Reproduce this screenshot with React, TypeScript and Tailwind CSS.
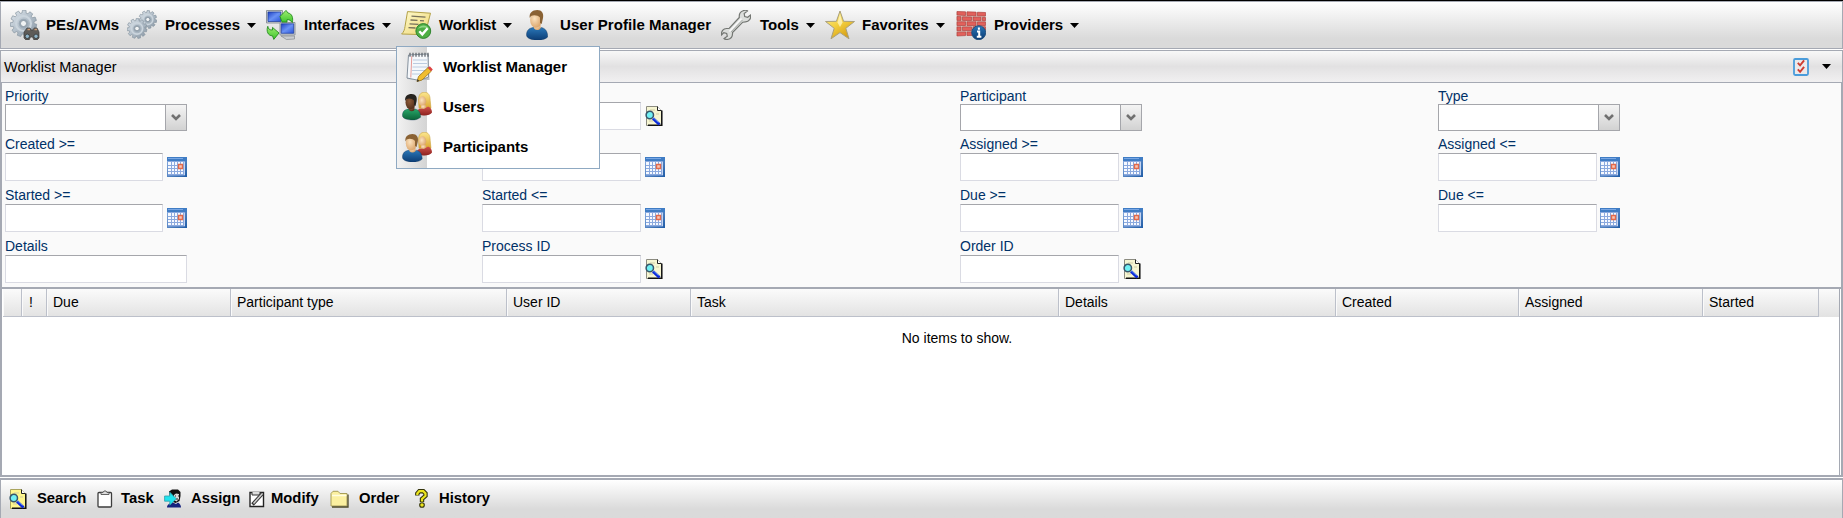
import React from "react";

function Svg({ w, h, children, cls = "" }: { w: number; h: number; children: React.ReactNode; cls?: string }) {
  return (
    <svg width={w} height={h} viewBox={`0 0 ${w} ${h}`} className={"block shrink-0 " + cls}>
      {children}
    </svg>
  );
}

function Defs() {
  return (
    <svg width="0" height="0" className="absolute">
      <defs>
        <linearGradient id="steel" x1="0" y1="0" x2="1" y2="1">
          <stop offset="0" stopColor="#dfe6ec" />
          <stop offset="0.5" stopColor="#b3bfca" />
          <stop offset="1" stopColor="#8593a0" />
        </linearGradient>
        <linearGradient id="screen" x1="0" y1="0" x2="1" y2="1">
          <stop offset="0" stopColor="#1d40c4" />
          <stop offset="0.5" stopColor="#6a92f4" />
          <stop offset="1" stopColor="#2a55da" />
        </linearGradient>
        <linearGradient id="green" x1="0" y1="0" x2="0" y2="1">
          <stop offset="0" stopColor="#a0ee70" />
          <stop offset="1" stopColor="#3cc42c" />
        </linearGradient>
        <linearGradient id="paper" x1="0" y1="0" x2="1" y2="1">
          <stop offset="0" stopColor="#fffbd0" />
          <stop offset="1" stopColor="#eed56e" />
        </linearGradient>
        <radialGradient id="skin" cx="0.4" cy="0.4" r="0.7">
          <stop offset="0" stopColor="#fbe3c0" />
          <stop offset="1" stopColor="#d79e62" />
        </radialGradient>
        <radialGradient id="dark" cx="0.4" cy="0.4" r="0.7">
          <stop offset="0" stopColor="#8d5a38" />
          <stop offset="1" stopColor="#4c2b19" />
        </radialGradient>
        <linearGradient id="blue" x1="0" y1="0" x2="0" y2="1">
          <stop offset="0" stopColor="#2a77b8" />
          <stop offset="1" stopColor="#0b3c74" />
        </linearGradient>
        <linearGradient id="teal" x1="0" y1="0" x2="0" y2="1">
          <stop offset="0" stopColor="#27a769" />
          <stop offset="1" stopColor="#0b6238" />
        </linearGradient>
        <linearGradient id="red" x1="0" y1="0" x2="0" y2="1">
          <stop offset="0" stopColor="#d0524c" />
          <stop offset="1" stopColor="#8d211f" />
        </linearGradient>
        <linearGradient id="hair" x1="0" y1="0" x2="0" y2="1">
          <stop offset="0" stopColor="#fbe68e" />
          <stop offset="1" stopColor="#dba62e" />
        </linearGradient>
        <linearGradient id="gold" x1="0" y1="0" x2="0.6" y2="1">
          <stop offset="0" stopColor="#fdf3a0" />
          <stop offset="0.55" stopColor="#f3cf3e" />
          <stop offset="1" stopColor="#d79f16" />
        </linearGradient>
        <linearGradient id="cal" x1="0" y1="0" x2="1" y2="1">
          <stop offset="0" stopColor="#8fb0e2" />
          <stop offset="1" stopColor="#1f5ca6" />
        </linearGradient>
      </defs>
    </svg>
  );
}

function Gear({ cx, cy, r, teeth = 11 }: { cx: number; cy: number; r: number; teeth?: number }) {
  const pts: string[] = [];
  const step = (Math.PI * 2) / teeth;
  for (let i = 0; i < teeth; i++) {
    const a = i * step + 0.2;
    [[-0.34, 0.8], [-0.24, 1], [0.24, 1], [0.34, 0.8]].forEach(([o, k]) => {
      pts.push(`${(cx + Math.cos(a + o * step) * r * k).toFixed(2)},${(cy + Math.sin(a + o * step) * r * k).toFixed(2)}`);
    });
  }
  return (
    <g>
      <polygon points={pts.join(" ")} fill="url(#steel)" stroke="#8795a1" strokeWidth="0.7" strokeLinejoin="round" />
      <circle cx={cx} cy={cy} r={r * 0.56} fill="none" stroke="#cbd5dd" strokeWidth={r * 0.16} />
      <circle cx={cx} cy={cy} r={r * 0.36} fill="#9dabb7" />
      <circle cx={cx} cy={cy} r={r * 0.23} fill="#f1f3f4" stroke="#7f8d99" strokeWidth="0.8" />
    </g>
  );
}

function PesIcon() {
  return (
    <Svg w={30} h={30}>
      <Gear cx={13.5} cy={13.5} r={13.3} />
      <path d="M14 22l3-4h3l1 2h2l1-2h3l2 4v6l-2 2h-3l-1.500-3h-2l-1.500 3h-3l-2-2z" fill="#5d5b58" stroke="#3e3e3e" strokeWidth="0.7" />
      <circle cx="17.300" cy="26.300" r="2.200" fill="#8fb4c8" stroke="#333" strokeWidth="0.8" />
      <circle cx="26" cy="26.300" r="2.200" fill="#8fb4c8" stroke="#333" strokeWidth="0.8" />
      <path d="M17.500 19.500h2.500M24.500 19.500H27" stroke="#c79a77" strokeWidth="1.300" />
    </Svg>
  );
}

function GearsIcon() {
  return (
    <Svg w={30} h={30}>
      <Gear cx={20.800} cy={9.500} r={9} />
      <Gear cx={10} cy={18.500} r={10} />
    </Svg>
  );
}

function InterfacesIcon() {
  return (
    <Svg w={30} h={30}>
      <path d="M0.500 0.500h16v12.500h-16z" fill="#c9ced2" stroke="#8f959b" />
      <path d="M2 2h12.800v9.500H2z" fill="url(#screen)" stroke="#17369a" strokeWidth="0.7" />
      <path d="M14 12.500h15V25H14z" fill="#d3d7da" stroke="#8f959b" />
      <path d="M15.200 13.800h12.500v9.500H15.200z" fill="url(#screen)" stroke="#17369a" strokeWidth="0.7" />
      <path d="M15 26h13.500v3l-8 .5z" fill="#c9ccd0" stroke="#85898f" strokeWidth="0.7" />
      <path d="M14 6.500L20 0.400l2 2.600c4 .6 5.400 4.700 4.300 9.500-1.800-2.300-3.300-3-5.300-2.800v2.300H16z" fill="url(#green)" stroke="#258c1e" strokeWidth="0.9" />
      <path d="M1.800 16.300c.3 2.700 2 3.900 4.700 3.700v-2.600l6.500 5.600-5.200 6.400-1.300-3.600C2 26 0 21 1.800 16.300z" fill="url(#green)" stroke="#258c1e" strokeWidth="0.9" />
    </Svg>
  );
}

function WorklistIcon() {
  return (
    <Svg w={31} h={28}>
      <path d="M6.500 0.600l23 1.600-5.500 21.500L0.600 23c2.300-2 3-4.500 3.400-7.500z" fill="url(#paper)" stroke="#b3a147" strokeWidth="1" />
      <path d="M10.500 5.200l14 1M9.500 9l7 .4m2.500.2l4 .3M8.500 12.800l9 .6M7.500 16.600l7 .4" stroke="#77705a" strokeWidth="1.300" />
      <circle cx="22.300" cy="20" r="7.400" fill="#4eae44" stroke="#30852f" />
      <path d="M17 18a6 6 0 0 1 11 0c-3-2-8-2-11 0z" fill="#8ed784" />
      <path d="M18.300 20.200l3 3.200 5.300-6.200" fill="none" stroke="#fff" strokeWidth="2.400" />
    </Svg>
  );
}

function Man({ y = 0, s = 1, skin = "url(#skin)", hair = "#8a6234", coat = "url(#blue)" }: { y?: number; s?: number; skin?: string; hair?: string; coat?: string }) {
  return (
    <g transform={`translate(0 ${y}) scale(${s})`}>
      <path d="M0.500 25c0-5 3-7.500 8-7.500 3 1.500 5 1.500 7 0 4 1 6.200 4 6.200 9.500-4 3.500-9 3.500-13 3-4-.5-8.200-2-8.200-5z" fill={coat} stroke="#12355c" strokeWidth="0.4" />
      <path d="M7.500 14h7v4.500c-2 2-4.500 2-6.500 0z" fill={skin} />
      <ellipse cx="9.800" cy="10" rx="5.700" ry="7.800" fill={skin} />
      <path d="M3.800 8c-1-5 2.500-8 7.500-8 4.500 0 6.700 3.500 5.700 8l-1.300 6-1.700-1V7.500c-2-2.500-6.500-3-9-1.500z" fill={hair} />
    </g>
  );
}

function Woman() {
  return (
    <g>
      <path d="M16.500 8c0-5 2-7.700 6-7.700s5.700 3 5.700 8l.8 8h-12z" fill="url(#hair)" stroke="#c79a32" strokeWidth="0.5" />
      <ellipse cx="20.500" cy="9.200" rx="3.700" ry="5" fill="url(#skin)" />
      <path d="M19 13h5v4h-5z" fill="url(#skin)" />
      <path d="M15 19c2-3 4-2 7-2l4-2.500c3 1 4 3.500 4 6-2 3.500-9 3.500-13 2z" fill="url(#red)" />
    </g>
  );
}

function UserIcon() {
  return (
    <Svg w={22} h={30}>
      <Man />
    </Svg>
  );
}

function UsersIcon() {
  return (
    <Svg w={30} h={30}>
      <Woman />
      <Man y={2} s={0.86} skin="url(#dark)" hair="#26231f" coat="url(#teal)" />
    </Svg>
  );
}

function ParticipantsIcon() {
  return (
    <Svg w={30} h={30}>
      <Woman />
      <Man y={2} s={0.93} />
    </Svg>
  );
}

function WrenchIcon() {
  return (
    <Svg w={30} h={30}>
      <path
        d="M21.500 1c3-1.300 4.500-.6 5 0l-3.300 2.500.5 3 3 .8L29.500 5c.8 3.500-1.500 6.800-5 6.800-1.200 0-2 0-2.700.4L11.500 22.500c.3 3.500-1.500 6.500-5.500 7-1.500 0-2.300-.3-3-1l3.300-2.300-.6-2.800-2.900-.8L.6 25c-.6-3.500 1.600-6.500 5-6.500 1 0 2 0 2.700-.3L18.300 7.500C18 4.500 19 2 21.500 1z"
        fill="#dcdedc"
        stroke="#747773"
        strokeWidth="1.200"
      />
      <path d="M20.500 8.500L8.500 21.500" stroke="#f9f9f9" strokeWidth="1.600" />
      <path d="M21.500 10L10 22" stroke="#aaaeaa" strokeWidth="1" />
    </Svg>
  );
}

function StarIcon() {
  return (
    <Svg w={30} h={30}>
      <path d="M15 1l3.600 10.300L29.500 11.500l-8.700 6.800L24 28.800 15 22.600 6 28.800l3.200-10.500L0.500 11.500l10.900-.2z" fill="url(#gold)" stroke="#aaa07c" strokeWidth="1" strokeLinejoin="round" />
      <path d="M15 4l2.500 8.500L15 17l-2.500-4.500z" fill="#fffad0" opacity="0.7" />
    </Svg>
  );
}

function WallIcon() {
  return (
    <Svg w={30} h={30}>
      <path d="M0.500 1.500L29.500 2.500v22l-29 1.500z" fill="#d9bcb6" />
      <g fill="#e2605b" stroke="#a83c3a" strokeWidth="0.6">
        <path d="M1 1.500l8.500.3v3.700L1 5zM11 1.800l9 .3v3.700l-9-.3zM21.500 2.200l8 .3v3.500l-8-.2z" />
        <path d="M1 6.500l4 .2v3.700H1zM6.500 6.800l9 .2v3.500l-9-.1zM17 7l8 .2v3.400l-8-.1zM26.500 7.300l3 .1v3.300h-3z" />
        <path d="M1 11.800h8.500v3.700H1zM11 11.800h9v3.700h-9zM21.500 11.900h8v3.600h-8z" />
        <path d="M1 16.900h4v3.800H1zM6.500 16.900h9v3.600l-9 .1zM17 16.800h8v3.500h-8zM26.500 16.800h3v3.200h-3z" />
        <path d="M1 22.200l8.500-.3v3.700L1 26zM11 21.900h7v3.500l-7 .1z" />
      </g>
      <circle cx="22.700" cy="22.700" r="7" fill="url(#blue)" stroke="#1d4d7c" strokeWidth="0.9" />
      <path d="M22.900 17.500v2.300M21 21.500h2.200v5.300M20.800 26.800h4.600" stroke="#fff" strokeWidth="2" fill="none" />
    </Svg>
  );
}

function NotepadIcon() {
  return (
    <Svg w={27} h={31}>
      <path d="M3.500 3h19l1 25H11L1 27z" fill="#b9bdc2" />
      <path d="M2.500 3l19.500-1 .5 23-9 3.500L1 26z" fill="#f5f8fb" stroke="#7b8895" strokeWidth="0.9" />
      <path d="M7 8h14M7 11.500h14M6.500 15h14.500M6 18.500h14M6 22h9" stroke="#bccce0" strokeWidth="1" />
      <path d="M5.800 4L4.800 25.500" stroke="#e79b97" strokeWidth="1" />
      <path d="M4 0.800v4M7 0.800v4M10 0.800v4M13 0.800v4M16 0.800v4M19 0.800v4M22 0.800v4" stroke="#62686f" strokeWidth="1.300" />
      <path d="M11 29.500l1.500-5L22 15.500l3.500 3.500-9.500 9z" fill="#f0bd2f" stroke="#9a7318" strokeWidth="0.8" />
      <path d="M21.800 15.800l2-1.600 3 3.200-1.800 1.800z" fill="#d44" />
      <path d="M10.800 29.800l.8-2.500 1.800 1.700z" fill="#333" />
    </Svg>
  );
}

function CalendarIcon() {
  return (
    <Svg w={20} h={20}>
      <path d="M0 0h20v20H0z" fill="url(#cal)" />
      <path d="M0 0h20v4H0z" fill="#3f7cc4" />
      <path d="M1 1.500h15" stroke="#79a7e4" />
      <path d="M1 4h17v14.500H1z" fill="#8ba9de" />
      <g fill="#f6f9ff">
        {[1, 5, 8, 11, 14].map((x) => [5, 9, 12, 15].map((y) => <path key={`${x}-${y}`} d={`M${x} ${y}h${x === 1 ? 3 : 2}v${y === 5 ? 3 : 2}h-${x === 1 ? 3 : 2}z`} />))}
        <path d="M17 5h1v13h-1z" fill="#c5d4f0" />
      </g>
      <path d="M11.500 7.500h4v4h-4z" fill="#f9c6b4" stroke="#e2694a" strokeWidth="1.400" />
    </Svg>
  );
}

function PageSearchIcon({ yellow = false }: { yellow?: boolean }) {
  return (
    <Svg w={18} h={20}>
      <path d="M1.500 0.500h11l4 4v15h-15z" fill={yellow ? "#fff68c" : "#f6f5d2"} stroke={yellow ? "#aaa45e" : "#8b8b80"} />
      <path d="M16.800 4.500V19.300H3" fill="none" stroke="#111" strokeWidth="1.500" />
      <path d="M12.500 0.500v4h4" fill="#fff" stroke="#222" />
      <path d="M5 4h5M11 8h3M4 15h4" stroke="#cfcda4" />
      <circle cx="4.800" cy="9" r="3.700" fill="#72f0f4" stroke="#37566b" strokeWidth="1.500" />
      <path d="M8 12.500l6.500 6" stroke="#0c28d8" strokeWidth="3" />
      <path d="M8 11.500l5.500 5" stroke="#69a4ff" strokeWidth="0.8" />
    </Svg>
  );
}

function ChecklistIcon() {
  return (
    <Svg w={16} h={18}>
      <rect x="1" y="1" width="14" height="16" rx="1.200" fill="#ece9ea" stroke="#4a9cdb" strokeWidth="1.800" />
      <path d="M4.800 4.800l2.300 2.500 4-5M4.800 11.300l2.300 2.500 4-5" fill="none" stroke="#cf3c30" strokeWidth="1.900" />
    </Svg>
  );
}

function ClipboardIcon() {
  return (
    <Svg w={16} h={18}>
      <rect x="1" y="2.500" width="13.500" height="14.500" rx="1" fill="#fff" stroke="#3d3d3d" strokeWidth="1.300" />
      <path d="M4 4.500V2.500h2L7 1h2l1 1.500h2v2z" fill="#ddd" stroke="#555" strokeWidth="0.9" />
    </Svg>
  );
}

function ModifyIcon() {
  return (
    <Svg w={16} h={18}>
      <path d="M1 2.500h13.500v14H1z" fill="#fff" stroke="#222" strokeWidth="1.400" />
      <path d="M3 2v3h8V2" fill="#ddd" stroke="#333" />
      <path d="M3.500 14.500L13.500 3.500" stroke="#333" strokeWidth="3.400" />
      <path d="M4.500 13.400L13.500 3.500" stroke="#cfcfcf" strokeWidth="1.500" />
    </Svg>
  );
}

function AssignIcon() {
  return (
    <Svg w={18} h={19}>
      <path d="M5 2.500L8 0.500h6L16.500 3v4l-1 5-4 2-5-2z" fill="#111" />
      <path d="M10 6l2-1.500 3 .5v5l-2.500 2.500L10 11z" fill="#d9d9d9" />
      <path d="M11 7h1M14 7h1M12 10h2" stroke="#222" />
      <path d="M3 18.500c0-3 3-4.500 6-5l3 1.500 2-1.500c2 1 3 3 3 5z" fill="#15237f" />
      <path d="M0.600 7h5.200V3.200l6.400 6.500-6.400 6.500v-4H.6z" fill="#20e4ee" stroke="#2e9ca8" strokeWidth="0.8" />
    </Svg>
  );
}

function FolderIcon() {
  return (
    <Svg w={19} h={18}>
      <path d="M1 3.500l2-2.200h5l2 2.200h7V16H1z" fill="#fbf0a0" stroke="#a89f5a" />
      <path d="M2 5.500h14.500" stroke="#fffde0" strokeWidth="1.500" />
      <path d="M18 4.500V17H2" fill="none" stroke="#4d4926" strokeWidth="1.300" />
    </Svg>
  );
}

function QuestionIcon() {
  return (
    <Svg w={13} h={19}>
      <path d="M2.300 6.500V4.500l2-2.300h4l2.200 2.300v2.300L7 10v3" fill="none" stroke="#35350c" strokeWidth="4.400" />
      <path d="M2.300 6V4.500l2-2.300h4l2.200 2.300v2.300L7 10v2.500" fill="none" stroke="#ece51e" strokeWidth="2.200" />
      <circle cx="7" cy="16" r="2.300" fill="#ece51e" stroke="#35350c" strokeWidth="1.100" />
    </Svg>
  );
}

function Caret({ cls = "" }: { cls?: string }) {
  return (
    <Svg w={9} h={5} cls={cls}>
      <path d="M0 0h9L4.500 5z" fill="#000" />
    </Svg>
  );
}

function MenuItem({ width, pad, icon, iconBox, label, caret, text = "" }: { width: string; pad: string; icon: React.ReactNode; iconBox: string; label: string; caret?: boolean; text?: string }) {
  return (
    <div className={"flex h-full shrink-0 items-center " + width + " " + pad}>
      <div className={"flex shrink-0 " + iconBox}>{icon}</div>
      <span className={"whitespace-nowrap " + text}>{label}</span>
      {caret && <Caret cls="ml-[7px]" />}
    </div>
  );
}

function TopMenu() {
  return (
    <div className="flex h-[48px] shrink-0 border border-[#a5a9b3] bg-linear-to-b from-white to-[#dadada] to-80% text-[15px] font-bold text-black">
      <MenuItem width="w-[116px]" pad="pl-[9px]" iconBox="w-[36px]" icon={<PesIcon />} label="PEs/AVMs" />
      <MenuItem width="w-[139px]" pad="pl-[10px]" iconBox="w-[38px]" icon={<GearsIcon />} label="Processes" caret />
      <MenuItem width="w-[134px]" pad="pl-[10px]" iconBox="w-[38px]" icon={<InterfacesIcon />} label="Interfaces" caret />
      <MenuItem width="w-[126px]" pad="pl-[11px]" iconBox="w-[38px]" icon={<WorklistIcon />} label="Worklist" text="tracking-[-0.25px]" caret />
      <MenuItem width="w-[196px]" pad="pl-[10px]" iconBox="w-[34px]" icon={<UserIcon />} label="User Profile Manager" text="tracking-[0.05px]" />
      <MenuItem width="w-[105px]" pad="pl-[9px]" iconBox="w-[39px]" icon={<WrenchIcon />} label="Tools" caret />
      <MenuItem width="w-[130px]" pad="pl-[8px]" iconBox="w-[37px]" icon={<StarIcon />} label="Favorites" caret />
      <MenuItem width="w-[140px]" pad="pl-[9px]" iconBox="w-[38px]" icon={<WallIcon />} label="Providers" caret />
    </div>
  );
}

function DropItem({ icon, label }: { icon: React.ReactNode; label: string }) {
  return (
    <div className="flex h-[40px] items-center">
      <div className="flex w-[46px] justify-start pl-[5px]">{icon}</div>
      <span className="tracking-[-0.05px]">{label}</span>
    </div>
  );
}

function WorklistDropdown() {
  return (
    <div className="absolute left-[396px] top-[45px] z-10 h-[123px] w-[204px] border border-[#8fa9c2] bg-white bg-[linear-gradient(to_right,#f2f2f2,#d4d4d4)] bg-[length:30px_100%] bg-no-repeat text-[15px] font-bold text-black">
      <DropItem icon={<div className="pl-[4px]"><NotepadIcon /></div>} label="Worklist Manager" />
      <DropItem icon={<UsersIcon />} label="Users" />
      <DropItem icon={<ParticipantsIcon />} label="Participants" />
    </div>
  );
}

type FieldKind = "select" | "date" | "lookup" | "text";

function Field({ label, kind, col, raised }: { label: string; kind: FieldKind; col: number; raised: boolean }) {
  const width = kind === "text" ? "w-[182px]" : col === 0 ? "w-[158px]" : "w-[159px]";
  const gap = col === 3 ? "ml-[3px]" : "ml-[4px]";
  return (
    <div className={"flex flex-col " + (raised ? "-mt-[2px]" : "")}>
      <div className={"h-[17px] text-[#003168] " + (kind === "select" ? "leading-[19px]" : "leading-[17px]")}>{label}</div>
      {kind === "select" ? (
        <div className="flex h-[27px] w-[182px] border border-[#a5a6ab] bg-white">
          <div className="flex-1" />
          <div className="flex w-[21px] items-center justify-center border-l border-[#a5a6ab] bg-linear-to-b from-[#f4f4f4] to-[#d2d2d2]">
            <Svg w={10} h={7}>
              <path d="M1 1l4 4 4-4" fill="none" stroke="#707070" strokeWidth="2.600" />
            </Svg>
          </div>
        </div>
      ) : (
        <div className="flex items-center">
          <div className={"h-[28px] border border-[#dadbe3] border-t-[#a5a6ab] bg-white " + width} />
          {kind === "date" && <div className={gap}><CalendarIcon /></div>}
          {kind === "lookup" && <div className={gap}><PageSearchIcon /></div>}
        </div>
      )}
    </div>
  );
}

function FieldRow({ cls, items }: { cls: string; items: (readonly [string, FieldKind] | null)[] }) {
  const hasSelect = items.some((it) => it?.[1] === "select");
  return (
    <div className={"grid grid-cols-[477px_478px_478px_1fr] " + cls}>
      {items.map((it, i) => (it ? <Field key={i} label={it[0]} kind={it[1]} col={i} raised={hasSelect && it[1] !== "select"} /> : <div key={i} />))}
    </div>
  );
}

function Head({ w, children }: { w: string; children?: React.ReactNode }) {
  return (
    <div className={"flex shrink-0 items-center border-b border-r border-[#bcc0ca] pl-[6px] shadow-[inset_1px_0_0_#fafafa] " + w}>{children}</div>
  );
}

function Action({ w, iconBox, icon, label }: { w: string; iconBox: string; icon: React.ReactNode; label: string }) {
  return (
    <div className={"flex shrink-0 items-center " + w}>
      <div className={"flex shrink-0 " + iconBox}>{icon}</div>
      <span>{label}</span>
    </div>
  );
}

export default function App() {
  return (
    <div className="relative flex h-[518px] w-[1843px] flex-col overflow-hidden border-t border-black bg-white font-['Liberation_Sans',Arial,sans-serif] text-[14px] text-black">
      <Defs />
      <TopMenu />
      <WorklistDropdown />

      <div className="mt-px flex h-[33px] shrink-0 items-center border border-[#a5a9b3] bg-[linear-gradient(to_bottom,#f8f8f8_0%,#e2e1e2_50%,#f1f0f1_100%)] pl-[3px] pr-[11px]">
        <span className="flex-1 pt-[2px] text-[14.5px]">Worklist Manager</span>
        <ChecklistIcon />
        <Caret cls="ml-[13px]" />
      </div>

      <div className="h-[204px] shrink-0 border-x-2 border-[#a5a9b3] bg-[#fafafa] pl-[3px] pt-[4px]">
        <FieldRow cls="h-[49px]" items={[["Priority", "select"], ["", "lookup"], ["Participant", "select"], ["Type", "select"]]} />
        <FieldRow cls="h-[51px]" items={[["Created >=", "date"], ["", "date"], ["Assigned >=", "date"], ["Assigned <=", "date"]]} />
        <FieldRow cls="h-[51px]" items={[["Started >=", "date"], ["Started <=", "date"], ["Due >=", "date"], ["Due <=", "date"]]} />
        <FieldRow cls="h-[46px]" items={[["Details", "text"], ["Process ID", "lookup"], ["Order ID", "lookup"], null]} />
      </div>

      <div className="flex h-[190px] shrink-0 border-2 border-[#a5a9b3] bg-white pl-px pr-px">
        <div className="flex flex-1 flex-col border-r border-[#a5a9b3]">
          <div className="flex h-[28px] shrink-0 bg-linear-to-b from-[#fbfbfb] to-[#e2e2e2]">
            <Head w="w-[19px]" />
            <Head w="w-[25px]"><span className="pl-px">!</span></Head>
            <Head w="w-[184px]">Due</Head>
            <Head w="w-[276px]">Participant type</Head>
            <Head w="w-[184px]">User ID</Head>
            <Head w="w-[368px]">Task</Head>
            <Head w="w-[277px]">Details</Head>
            <Head w="w-[183px]">Created</Head>
            <Head w="w-[184px]">Assigned</Head>
            <Head w="w-[116px]">Started</Head>
          </div>
          <div className="pl-[72px] pt-[11px] text-center">No items to show.</div>
        </div>
      </div>

      <div className="mt-px flex h-[41px] shrink-0 border border-b-0 border-t-2 border-[#a5a9b3] bg-linear-to-b from-white to-[#dadada] to-75% pb-[2px] pl-[8px] text-[14.8px] font-bold">
        <Action w="w-[88px]" iconBox="w-[28px]" icon={<PageSearchIcon yellow />} label="Search" />
        <Action w="w-[67px]" iconBox="w-[24px]" icon={<ClipboardIcon />} label="Task" />
        <Action w="w-[85px]" iconBox="w-[27px]" icon={<AssignIcon />} label="Assign" />
        <Action w="w-[81px]" iconBox="w-[22px]" icon={<ModifyIcon />} label="Modify" />
        <Action w="w-[85px]" iconBox="w-[29px]" icon={<FolderIcon />} label="Order" />
        <Action w="w-[90px]" iconBox="w-[24px]" icon={<QuestionIcon />} label="History" />
      </div>
    </div>
  );
}
